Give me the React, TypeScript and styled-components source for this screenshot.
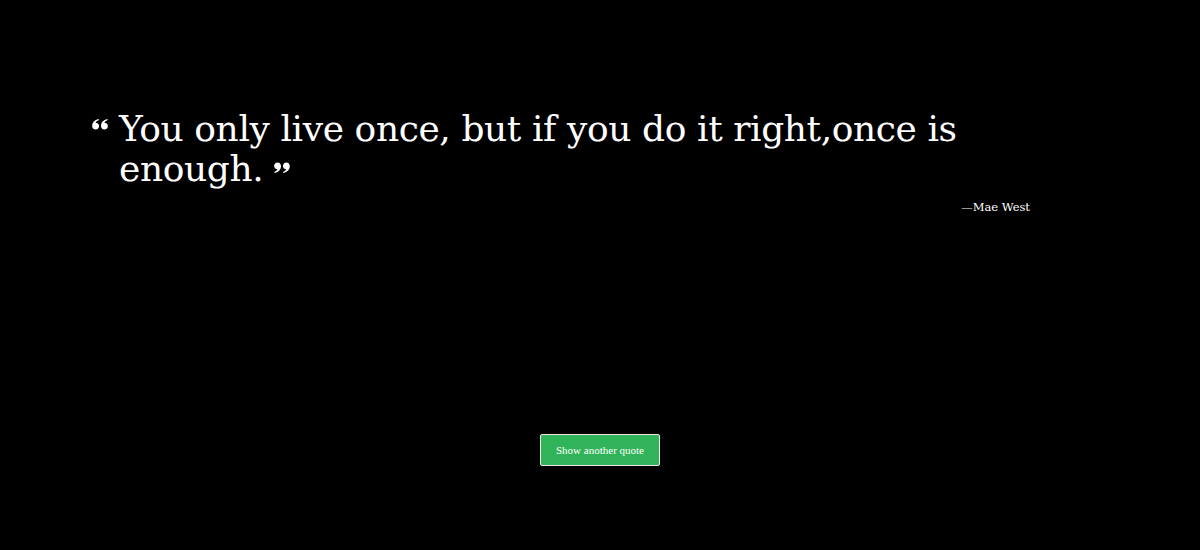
import React from "react";
import styled, { createGlobalStyle } from "styled-components";

const Global = createGlobalStyle`
  html, body { margin: 0; padding: 0; background: #000; }
  body { font-family: "DejaVu Serif", "Liberation Serif", serif; color: #fff; }
`;

const Page = styled.main`
  width: 1200px;
  height: 550px;
  background: #000;
  display: flex;
  flex-direction: column;
  box-sizing: border-box;
  padding: 107px 0 0 90px;
`;

const QuoteBox = styled.section`
  width: 940px;
  display: flex;
  flex-direction: column;
`;

const QuoteRow = styled.div`
  display: flex;
  align-items: flex-start;
`;

const Mark = styled.svg<{ $offset: number }>`
  flex: none;
  width: 16px;
  height: 11px;
  margin-top: ${(p) => p.$offset}px;
  margin-left: 2px;
  fill: #fff;
`;

const QuoteText = styled.p`
  margin: 2px 0 0 11px;
  width: 880px;
  font-family: "DejaVu Serif", "Liberation Serif", serif;
  font-size: 36px;
  line-height: 40px;
  font-weight: 400;
  letter-spacing: -0.4px;
  color: #fff;
`;

const InlineMark = styled.svg`
  width: 16px;
  height: 11px;
  margin-left: 11px;
  fill: #fff;
  vertical-align: 8px;
`;

const Author = styled.p`
  margin: 10px 0 0 0;
  text-align: right;
  font-family: "DejaVu Serif", "Liberation Serif", serif;
  font-size: 11.5px;
  line-height: 16px;
  color: #fff;
`;

const ButtonRow = styled.div`
  display: flex;
  justify-content: center;
  margin-top: 219px;
  margin-left: -90px;
`;

const Button = styled.button`
  width: 120px;
  height: 32px;
  background: #31b35a;
  border: 1px solid #e8e8e8;
  border-radius: 2px;
  color: #fff;
  font-family: "Liberation Serif", "DejaVu Serif", serif;
  font-size: 11px;
  padding: 0;
  cursor: pointer;
`;

const SIX =
  "M0.2 7C0.2 3.6 2.6 1 6.5 0L7 1.1C4.9 1.9 3.9 3 3.7 3.7C5.7 3.8 7.1 5.2 7.1 7C7.1 9 5.6 10.6 3.6 10.6C1.6 10.6 0.2 9 0.2 7Z";

const Marks = () => (
  <>
    <path d={SIX} />
    <path d={SIX} transform="translate(8.8 0)" />
  </>
);

const LeftQuote = ({ offset }: { offset: number }) => (
  <Mark $offset={offset} viewBox="0 0 16 11">
    <Marks />
  </Mark>
);

const RightQuote = () => (
  <InlineMark viewBox="0 0 16 11">
    <g transform="rotate(180 8 5.5)">
      <Marks />
    </g>
  </InlineMark>
);

export default function App() {
  return (
    <>
      <Global />
      <Page>
        <QuoteBox>
          <QuoteRow>
            <LeftQuote offset={12} />
            <QuoteText>
              You only live once, but if you do it right,once is enough.
              <RightQuote />
            </QuoteText>
          </QuoteRow>
          <Author>—Mae West</Author>
        </QuoteBox>
        <ButtonRow>
          <Button>Show another quote</Button>
        </ButtonRow>
      </Page>
    </>
  );
}
